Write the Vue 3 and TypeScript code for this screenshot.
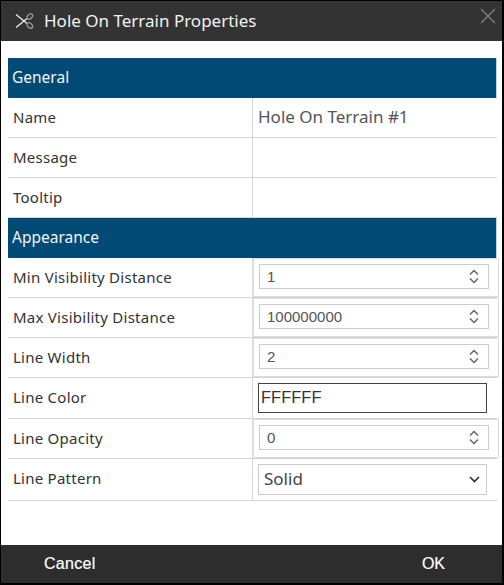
<script setup lang="ts">
interface Row {
  label: string
  kind: 'text' | 'number' | 'color' | 'select'
  value: string
}

const general: Row[] = [
  { label: 'Name', kind: 'text', value: 'Hole On Terrain #1' },
  { label: 'Message', kind: 'text', value: '' },
  { label: 'Tooltip', kind: 'text', value: '' },
]

const appearance: Row[] = [
  { label: 'Min Visibility Distance', kind: 'number', value: '1' },
  { label: 'Max Visibility Distance', kind: 'number', value: '100000000' },
  { label: 'Line Width', kind: 'number', value: '2' },
  { label: 'Line Color', kind: 'color', value: 'FFFFFF' },
  { label: 'Line Opacity', kind: 'number', value: '0' },
  { label: 'Line Pattern', kind: 'select', value: 'Solid' },
]

const sections = [
  { title: 'General', rows: general },
  { title: 'Appearance', rows: appearance },
]
</script>

<template>
  <div class="dialog">
    <header class="title-bar">
      <svg class="scissors" width="20" height="20" viewBox="0 0 20 20" fill="none">
        <path d="M2 3.5 L13 12.5" stroke="#e8e8e8" stroke-width="1.4" />
        <path d="M2 16.5 L13 7.5" stroke="#e8e8e8" stroke-width="1.4" />
        <ellipse cx="15.8" cy="5.5" rx="3.2" ry="2.2" stroke="#999" stroke-width="1.3" transform="rotate(-45 15.8 5.5)" />
        <ellipse cx="15.8" cy="14.5" rx="3.2" ry="2.2" stroke="#999" stroke-width="1.3" transform="rotate(45 15.8 14.5)" />
      </svg>
      <span class="title">Hole On Terrain Properties</span>
      <svg class="close" width="16" height="16" viewBox="0 0 16 16">
        <path d="M1 1 L15 15 M15 1 L1 15" stroke="#777" stroke-width="1.6" />
      </svg>
    </header>

    <main class="content">
      <section v-for="section in sections" :key="section.title">
        <h2 class="section-head">{{ section.title }}</h2>
        <div v-for="row in section.rows" :key="row.label" class="row" :class="'row-' + row.kind">
          <div class="label">{{ row.label }}</div>
          <div class="cell">
            <span v-if="row.kind === 'text'" class="plain">{{ row.value }}</span>
            <div v-else-if="row.kind === 'number'" class="spin-wrap">
              <div class="spin">
                <span>{{ row.value }}</span>
                <svg width="10" height="15" viewBox="0 0 10 15" fill="none">
                  <path d="M1 5.5 L5 1.5 L9 5.5 M1 9.5 L5 13.5 L9 9.5" stroke="#666" stroke-width="1.5" />
                </svg>
              </div>
            </div>
            <div v-else-if="row.kind === 'color'" class="color-box">{{ row.value }}</div>
            <div v-else class="select-box">
              <span>{{ row.value }}</span>
              <svg width="11" height="7" viewBox="0 0 11 7" fill="none">
                <path d="M1 1 L5.5 5.5 L10 1" stroke="#333" stroke-width="1.7" />
              </svg>
            </div>
          </div>
        </div>
      </section>
    </main>

    <footer class="actions">
      <span class="cancel">Cancel</span>
      <span class="ok">OK</span>
    </footer>
  </div>
</template>

<style>
html,
body {
  margin: 0;
  background: #000;
}
</style>

<style scoped>
.dialog {
  box-sizing: border-box;
  width: 504px;
  height: 585px;
  padding: 1px 2px 2px 1px;
  display: flex;
  flex-direction: column;
  background: #000;
  font-family: "Noto Sans", "Open Sans", sans-serif;
}

.title-bar {
  height: 40px;
  flex: none;
  display: flex;
  align-items: center;
  background: #333;
  color: #f2f2f2;
  padding-left: 13px;
}

.scissors {
  flex: none;
}

.title {
  margin-left: 10px;
  margin-bottom: 2px;
  font-size: 17px;
}

.close {
  margin-left: auto;
  margin-right: 6px;
  margin-top: -10px;
}

.content {
  flex: 1;
  background: #fff;
  padding: 17px 5px 0 7px;
}

.section-head {
  box-sizing: border-box;
  margin: 0;
  height: 40px;
  line-height: 39px;
  padding-left: 4px;
  background: #004a75;
  color: #f4f4f4;
  font-size: 15.5px;
  font-weight: 400;
  border-right: 1px solid #ccc;
}

.row {
  box-sizing: border-box;
  display: flex;
  height: 40px;
  border-bottom: 1px solid #d4d4d4;
  color: #333;
}

.row-color {
  height: 41px;
}

.row-select {
  height: 42px;
}

.label {
  box-sizing: border-box;
  width: 244px;
  flex: none;
  padding-left: 5px;
  font-size: 15px;
  letter-spacing: 0.25px;
  line-height: 38px;
}

.cell {
  flex: 1;
  min-width: 0;
  border-left: 1px solid #d4d4d4;
}

.plain {
  display: block;
  padding-left: 5px;
  font-size: 17px;
  line-height: 37px;
  color: #555;
}

.spin-wrap {
  box-sizing: border-box;
  width: 247px;
  height: 39px;
  margin-left: -1px;
  border: 1px solid #ddd;
  border-left-width: 2px;
  padding: 5px 9px 0 5px;
}

.spin {
  box-sizing: border-box;
  height: 25px;
  border: 1px solid #ccc;
  padding: 0 9px 0 7px;
  display: flex;
  align-items: center;
  justify-content: space-between;
  font-family: "Liberation Sans", Arial, sans-serif;
  font-size: 15px;
  color: #555;
}

.color-box {
  box-sizing: border-box;
  margin: 5px 0 0 5px;
  width: 229px;
  height: 30px;
  border: 1px solid #444;
  padding-left: 2px;
  font-family: "Liberation Sans", Arial, sans-serif;
  font-size: 16.5px;
  line-height: 26px;
  color: #333;
}

.select-box {
  box-sizing: border-box;
  margin: 5px 0 0 5px;
  width: 229px;
  height: 31px;
  border: 1px solid #ccc;
  padding: 0 6px 3px 5px;
  display: flex;
  align-items: center;
  justify-content: space-between;
  font-size: 17px;
  color: #444;
}

.select-box svg {
  margin-top: 3px;
}

.actions {
  height: 38px;
  flex: none;
  display: flex;
  align-items: center;
  background: #2d2d2d;
  color: #fff;
  font-family: "Liberation Sans", Arial, sans-serif;
  font-size: 16px;
  -webkit-text-stroke: 0.2px #fff;
}

.cancel {
  margin-left: 43px;
  letter-spacing: 0.3px;
}

.ok {
  margin-left: auto;
  margin-right: 57px;
}
</style>
